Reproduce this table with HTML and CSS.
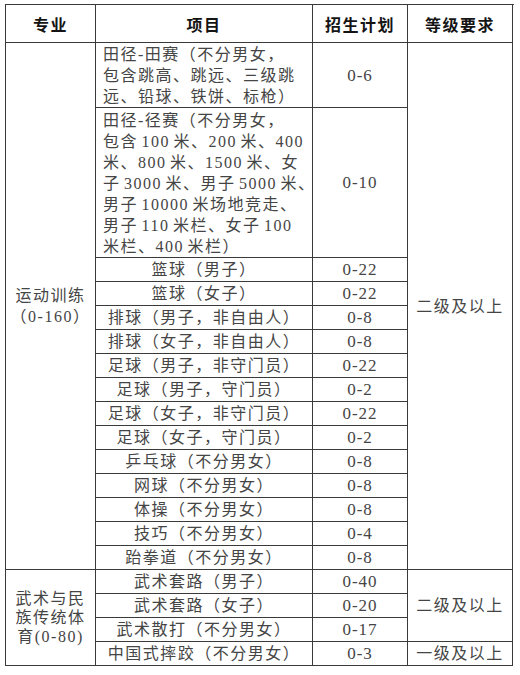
FILE: index.html
```html
<!DOCTYPE html>
<html lang="zh">
<head>
<meta charset="utf-8">
<title>招生计划</title>
<link rel="stylesheet" href="styles.css">
</head>
<body>
<div class="sheet">
  <div class="cell head">专业</div>
  <div class="cell head">项目</div>
  <div class="cell head">招生计划</div>
  <div class="cell head">等级要求</div>

  <div class="cell major major-a">运动训练<br>（0-160）</div>
  <div class="cell level level-a">二级及以上</div>

  <div class="cell item multi">田径-田赛（不分男女，<br>包含跳高、跳远、三级跳<br>远、铅球、铁饼、标枪）</div>
  <div class="cell num">0-6</div>
  <div class="cell item multi tight">田径-径赛（不分男女，<br>包含 100 米、200 米、400<br>米、800 米、1500 米、女<br>子 3000 米、男子 5000 米、<br>男子 10000 米场地竞走、<br>男子 110 米栏、女子 100<br>米栏、400 米栏）</div>
  <div class="cell num">0-10</div>
  <div class="cell item">篮球（男子）</div><div class="cell num">0-22</div>
  <div class="cell item">篮球（女子）</div><div class="cell num">0-22</div>
  <div class="cell item">排球（男子，非自由人）</div><div class="cell num">0-8</div>
  <div class="cell item">排球（女子，非自由人）</div><div class="cell num">0-8</div>
  <div class="cell item">足球（男子，非守门员）</div><div class="cell num">0-22</div>
  <div class="cell item">足球（男子，守门员）</div><div class="cell num">0-2</div>
  <div class="cell item">足球（女子，非守门员）</div><div class="cell num">0-22</div>
  <div class="cell item">足球（女子，守门员）</div><div class="cell num">0-2</div>
  <div class="cell item">乒乓球（不分男女）</div><div class="cell num">0-8</div>
  <div class="cell item">网球（不分男女）</div><div class="cell num">0-8</div>
  <div class="cell item">体操（不分男女）</div><div class="cell num">0-8</div>
  <div class="cell item">技巧（不分男女）</div><div class="cell num">0-4</div>
  <div class="cell item">跆拳道（不分男女）</div><div class="cell num">0-8</div>

  <div class="cell major major-b">武术与民<br>族传统体<br>育(0-80)</div>
  <div class="cell level level-b">二级及以上</div>

  <div class="cell item">武术套路（男子）</div><div class="cell num">0-40</div>
  <div class="cell item">武术套路（女子）</div><div class="cell num">0-20</div>
  <div class="cell item">武术散打（不分男女）</div><div class="cell num">0-17</div>
  <div class="cell item">中国式摔跤（不分男女）</div><div class="cell num">0-3</div>
  <div class="cell level level-c">一级及以上</div>
</div>
</body>
</html>
```

FILE: styles.css
```css
html, body {
  margin: 0;
  padding: 0;
  background: #ffffff;
}

body {
  font-family: "Liberation Serif", "Noto Sans CJK SC", serif;
  font-size: 16px;
  color: #454545;
}

.sheet {
  margin: 4px 0 0 5px;
  width: 508px;
  display: grid;
  grid-template-columns: 90px 217px 95px 105px;
  grid-template-rows: 38px 65px 150px repeat(17, 24px);
  border-top: 1px solid #3a3a3a;
  border-left: 1px solid #3a3a3a;
}

.cell {
  box-sizing: border-box;
  border-right: 1px solid #3a3a3a;
  border-bottom: 1px solid #3a3a3a;
  display: flex;
  align-items: center;
  justify-content: center;
  text-align: center;
  font-family: "Liberation Serif", "Noto Sans CJK SC", serif;
  letter-spacing: 1.5px;
  line-height: 21px;
  white-space: nowrap;
}

.num {
  font-size: 17px;
  letter-spacing: 1px;
}

.head {
  font-family: "Noto Sans CJK SC", sans-serif;
  font-weight: 700;
  color: #141414;
  font-size: 16px;
  letter-spacing: 1.5px;
  padding-top: 2px;
}

.item.multi {
  justify-content: flex-start;
  text-align: left;
  padding-left: 7px;
  padding-top: 1px;
}

.item.tight {
  word-spacing: -2px;
}

.major-a {
  grid-column: 1;
  grid-row: 2 / 17;
  line-height: 21px;
}

.major-b {
  grid-column: 1;
  grid-row: 17 / 21;
  line-height: 19px;
}

.level-a {
  grid-column: 4;
  grid-row: 2 / 17;
}

.level-b {
  grid-column: 4;
  grid-row: 17 / 20;
}

.level-c {
  grid-column: 4;
  grid-row: 20;
}
```
